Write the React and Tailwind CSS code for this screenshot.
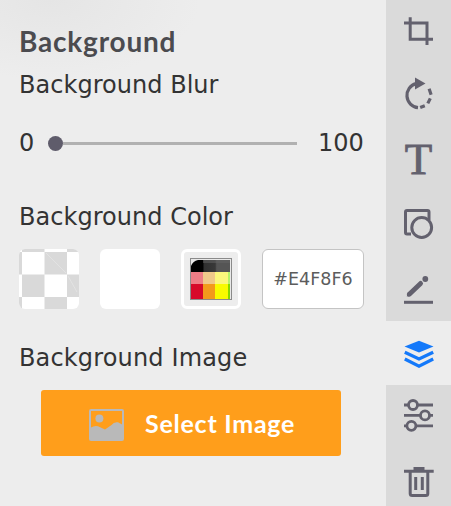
import React, { useState } from 'react';

const tools = [
    {
        id: 'crop',
        height: 'h-16',
        icon: <path d="M24.2 17.3V39.2H47M18 23H41V45" strokeWidth="3" />,
    },
    {
        id: 'rotate',
        height: 'h-16',
        icon: (
            <>
                <path d="M30 19.6A12.3 12.3 0 0 0 32 43.7" strokeWidth="3.2" />
                <path d="M34.2 43.5l4.6-1.8M41.8 39.4l2.5-5M45.1 30.8l-2-6" strokeWidth="3.2" />
                <path d="M29 13.5v12l10.5-6z" fill="currentColor" stroke="none" />
            </>
        ),
    },
    {
        id: 'text',
        height: 'h-16',
        icon: (
            <text x="32.5" y="45.5" textAnchor="middle" className="font-['Liberation_Serif',serif] text-[45px]" fill="currentColor" strokeWidth="0.9">
                T
            </text>
        ),
    },
    {
        id: 'shapes',
        height: 'h-16',
        icon: (
            <>
                <path d="M25 42H21a1.5 1.5 0 0 1-1.5-1.5V20a1.5 1.5 0 0 1 1.5-1.5H41.5A1.5 1.5 0 0 1 43 20V28" strokeWidth="3" />
                <circle cx="35.7" cy="35.5" r="9.9" strokeWidth="3" />
            </>
        ),
    },
    {
        id: 'draw',
        height: 'h-[65px]',
        icon: (
            <>
                <path d="M18 45.3H47" strokeWidth="3" />
                <path d="M23.3 37.3L34.6 26.4" strokeWidth="4.8" strokeLinecap="round" />
                <path d="M20.8 39.4l.8-4 3.4 3.3z" fill="currentColor" stroke="none" />
                <circle cx="39.3" cy="22" r="2.9" fill="currentColor" stroke="none" />
            </>
        ),
    },
    {
        id: 'background',
        height: 'h-16',
        icon: (
            <>
                <path d="M33 19.8L47.5 25.5 33 31.5 18.5 25.5z" fill="currentColor" stroke="none" />
                <path d="M18.8 31.2L33 38l14.2-6.8M18.8 38L33 45.2l14.2-7.2" strokeWidth="3.2" />
            </>
        ),
    },
    {
        id: 'adjust',
        height: 'h-16',
        icon: (
            <>
                <path d="M18 20h4.6M31.4 20H47M18 30.4H34.6M43.4 30.4H47M18 40.8h3M29.8 40.8H47" strokeWidth="2.8" />
                <circle cx="27" cy="20" r="4.5" strokeWidth="2.8" />
                <circle cx="39" cy="30.4" r="4.5" strokeWidth="2.8" />
                <circle cx="25.4" cy="40.8" r="4.5" strokeWidth="2.8" />
            </>
        ),
    },
    {
        id: 'delete',
        height: 'h-16',
        icon: (
            <>
                <path d="M18 22.3H47.7M27.5 19.5H38.5" strokeWidth="3" />
                <path d="M24.2 23V44.5a2 2 0 0 0 2 2H39.8a2 2 0 0 0 2-2V23M29.7 28V41M36.3 28V41" strokeWidth="3" />
            </>
        ),
    },
];

const Toolbar = ({ active, onSelect }) => (
    <nav className="flex w-[65px] shrink-0 flex-col bg-[#dadada]">
        {tools.map((tool) => (
            <button
                key={tool.id}
                aria-label={tool.id}
                onClick={() => onSelect(tool.id)}
                className={`w-full shrink-0 ${tool.height} ${active === tool.id ? 'bg-[#ededed] text-[#1479fa]' : 'text-[#63616e]'}`}
            >
                <svg width="65" height="64" viewBox="0 0 65 64" fill="none" stroke="currentColor">
                    {tool.icon}
                </svg>
            </button>
        ))}
    </nav>
);

const Palette = () => (
    <svg width="42" height="42" viewBox="0 0 42 42">
        <defs>
            <linearGradient id="paletteTop">
                <stop offset="0.3" stopColor="#000" />
                <stop offset="0.34" stopColor="#303030" />
                <stop offset="0.62" stopColor="#383838" />
                <stop offset="0.66" stopColor="#555" />
            </linearGradient>
        </defs>
        <rect x="0.5" y="0.5" width="41" height="41" fill="#e8e8e8" stroke="#8b8b8b" />
        <path d="M1 8Q3 3 8 2H40V14H1z" fill="url(#paletteTop)" />
        <path d="M13 2H40V5H13z" fill="#666" opacity="0.5" />
        <path d="M1 14H13V26H1z" fill="#ee7d86" />
        <path d="M13 14H25V26H13z" fill="#f0c98a" />
        <path d="M25 14H38V26H25z" fill="#fbf77c" />
        <path d="M1 26H13V41H1z" fill="#d70929" />
        <path d="M13 26H25V41H13z" fill="#f39a1b" />
        <path d="M25 26H38V41H25z" fill="#f8fb00" />
        <path d="M38 14H40V26H38z" fill="#b4f26a" />
        <path d="M38 26H40V41H38z" fill="#86d800" />
    </svg>
);

const Checker = () => (
    <svg width="60" height="60" viewBox="0 0 60 60">
        <rect width="60" height="60" fill="#fff" />
        <path d="M3 0H25.5V3H3zM48 0H60V3H48zM0 3H3V25.5H0zM25.5 3H48V25.5H25.5zM3 25.5H25.5V48H3zM48 25.5H60V48H48zM0 48H3V60H0zM25.5 48H48V60H25.5z" fill="#d9d9d9" />
        <path d="M27 4L47 24M49 27L58 43" stroke="#e5e5e5" strokeWidth="0.8" />
    </svg>
);

const App = () => {
    const [active, setActive] = useState('background');
    const [color, setColor] = useState('#E4F8F6');

    return (
        <div className="flex h-[506px] w-[451px] overflow-hidden bg-[#ededed] font-['DejaVu_Sans',sans-serif] text-[#333]">
            <main className="flex w-[386px] shrink-0 flex-col bg-[radial-gradient(ellipse_150px_80px_at_50px_0px,#e5e5e5,#ededed)] pl-[19px] whitespace-nowrap">
                <h1 className="mt-[25px] h-8 font-['Lato',sans-serif] text-[28px] leading-8 font-bold tracking-[0.8px] text-[#4b4b4f]">Background</h1>
                <h2 className="mt-3 h-8 text-[24px] leading-8 tracking-[0.03px]">Background Blur</h2>

                <div className="mt-[26px] flex h-8 items-center text-[24px] leading-8">
                    <span className="w-[29px]">0</span>
                    <div className="flex h-4 w-[249px] items-center">
                        <div className="size-[15px] shrink-0 rounded-full bg-[#5f5c6b]"></div>
                        <div className="h-[3px] flex-1 bg-[#b1b1b1]"></div>
                    </div>
                    <span className="ml-[21px]">100</span>
                </div>

                <h2 className="mt-[42px] h-8 text-[24px] leading-8 tracking-[0.03px]">Background Color</h2>
                <div className="mt-4 flex h-[60px] gap-[21px]">
                    <button className="size-[60px] overflow-hidden rounded-md">
                        <Checker />
                    </button>
                    <button className="size-[60px] rounded-md bg-white"></button>
                    <button className="flex size-[60px] items-center justify-center rounded-md border-3 border-white">
                        <Palette />
                    </button>
                    <input
                        value={color}
                        onChange={(e) => setColor(e.target.value)}
                        className="h-[60px] w-[102px] rounded-md border border-[#c4c4c4] bg-white text-center text-[17.5px] text-[#5c5c5c] outline-none"
                    />
                </div>

                <h2 className="mt-[33px] h-8 text-[24px] leading-8 tracking-[0.15px]">Background Image</h2>
                <button className="mt-4 ml-[22px] flex h-[66px] w-[300px] items-center rounded-[3px] bg-[#ff9e1b] pl-12 text-white">
                    <svg width="36" height="32" viewBox="0 0 36 32" className="mt-1">
                        <rect x="1" y="1" width="33" height="30" rx="1" fill="none" stroke="#b9b9b9" strokeWidth="2" />
                        <circle cx="10.4" cy="9.5" r="4" fill="#b9b9b9" />
                        <path d="M1 19Q6 16 9 17.3L16 20.5 22.5 16Q25 12.5 29 13.3L34 16V31H1z" fill="#b9b9b9" />
                    </svg>
                    <span className="ml-5 font-['Lato',sans-serif] text-[25px] leading-8 font-bold tracking-[0.75px]">Select Image</span>
                </button>
            </main>
            <Toolbar active={active} onSelect={setActive} />
        </div>
    );
};

export default App;
